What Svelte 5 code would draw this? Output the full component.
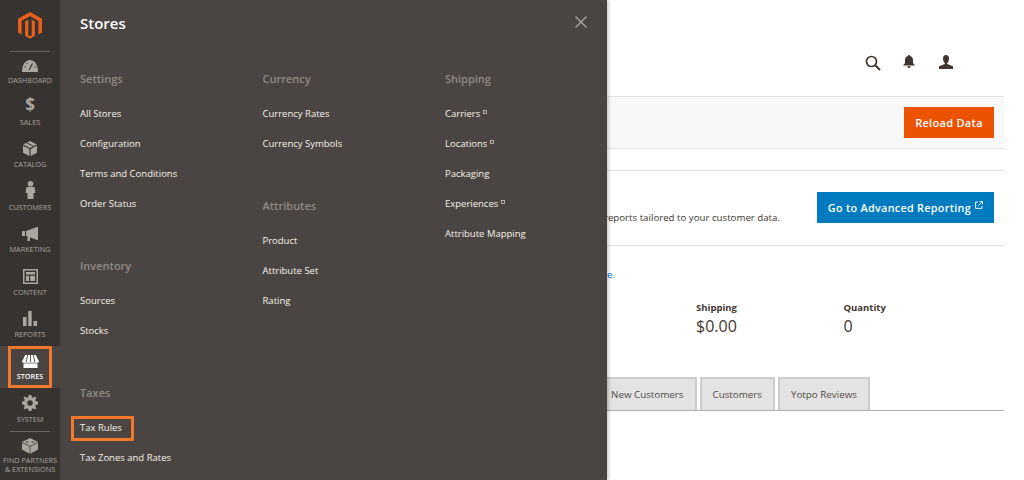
<script>
  const nav = [
    { id: 'dashboard', label: 'DASHBOARD' },
    { id: 'sales', label: 'SALES' },
    { id: 'catalog', label: 'CATALOG' },
    { id: 'customers', label: 'CUSTOMERS' },
    { id: 'marketing', label: 'MARKETING' },
    { id: 'content', label: 'CONTENT' },
    { id: 'reports', label: 'REPORTS' },
    { id: 'stores', label: 'STORES', active: true },
    { id: 'system', label: 'SYSTEM' }
  ];
  const columns = [
    [
      { title: 'Settings', links: ['All Stores', 'Configuration', 'Terms and Conditions', 'Order Status'] },
      { title: 'Inventory', links: ['Sources', 'Stocks'] },
      { title: 'Taxes', links: ['Tax Rules', 'Tax Zones and Rates'] }
    ],
    [
      { title: 'Currency', links: ['Currency Rates', 'Currency Symbols'] },
      { title: 'Attributes', links: ['Product', 'Attribute Set', 'Rating'] }
    ],
    [
      { title: 'Shipping', links: ['Carriers*', 'Locations*', 'Packaging', 'Experiences*', 'Attribute Mapping'] }
    ]
  ];
</script>

<div class="page">
  <aside class="sidebar">
    <div class="logo">
      <svg width="24" height="27" viewBox="0 0 24 27">
        <path fill="#eb5f1c" d="M12 0 L24 6.8 V20.6 L20.4 22.6 V8.9 L12 4.1 L3.6 8.9 V22.6 L0 20.6 V6.8 Z" />
        <path fill="#eb5f1c" d="M10.3 7.6 V23.2 L12 24.2 L13.7 23.2 V7.6 L16.9 9.5 V23.8 L12 26.8 L7.1 23.8 V9.5 Z" />
      </svg>
    </div>
    <nav class="nav">
      {#each nav as item}
        <div class="nav-item" class:active={item.active}>
          <div class="nav-inner">
            <span class="icon">
              {#if item.id === 'dashboard'}
                <svg width="16" height="12" viewBox="0 0 16 12"><path fill="currentColor" d="M0 12 C0 5 3 0 8 0 S16 5 16 12 Z" /><path stroke="#373330" stroke-width="1.2" d="M7 10 L10.5 3.5" /><circle cx="3" cy="7" r=".7" fill="#373330"/><circle cx="5" cy="3.6" r=".7" fill="#373330"/><circle cx="13" cy="7" r=".7" fill="#373330"/></svg>
              {:else if item.id === 'sales'}
                <span class="dollar">$</span>
              {:else if item.id === 'catalog'}
                <svg width="14" height="15" viewBox="0 0 14 15"><path fill="currentColor" d="M0 3.6 L7 0 L14 3.6 L7 7 Z" /><path fill="currentColor" d="M0 4.8 L6.4 8 V15 L0 11.8 Z M14 4.8 L7.6 8 V15 L14 11.8 Z" /><path stroke="#373330" stroke-width="1" d="M3.5 1.8 L10.5 5.3" /></svg>
              {:else if item.id === 'customers'}
                <svg width="11" height="18" viewBox="0 0 11 18"><circle cx="5.5" cy="2.8" r="2.8" fill="currentColor" /><path fill="currentColor" d="M1.5 6 H9.5 L10.5 12 H8.5 V18 H2.5 V12 H.5 Z" /></svg>
              {:else if item.id === 'marketing'}
                <svg width="16" height="14" viewBox="0 0 16 14"><path fill="currentColor" d="M0 4 H3 V9 H0 Z M4 4 L15 0 H16 V13 H15 L4 9 Z M5.5 10 H8 V14 H5.5 Z" /></svg>
              {:else if item.id === 'content'}
                <svg width="15" height="15" viewBox="0 0 15 15"><path fill="currentColor" fill-rule="evenodd" d="M0 0 H15 V15 H0 Z M1.5 1.5 V13.5 H13.5 V1.5 Z" /><path fill="currentColor" d="M3 3 H12 V5.5 H3 Z M3 6.7 H6 V12 H3 Z M7.2 6.7 H12 V12 H7.2 Z" /></svg>
              {:else if item.id === 'reports'}
                <svg width="14" height="15" viewBox="0 0 14 15"><path fill="currentColor" d="M0 6 H3.5 V15 H0 Z M5.2 0 H8.7 V15 H5.2 Z M10.5 10 H14 V15 H10.5 Z" /></svg>
              {:else if item.id === 'stores'}
                <svg width="17" height="13" viewBox="0 0 17 13"><path fill="currentColor" d="M3.2 0 H13.8 L17 6.4 C17 7.4 15.8 7.8 15 7.8 H2 C1.2 7.8 0 7.4 0 6.4 Z" /><path stroke="#4a4542" stroke-width=".9" d="M5.6 0 L4.2 7 M8.5 0 V7 M11.4 0 L12.8 7" /><path fill="currentColor" d="M1.5 8.4 H15.5 V13 H1.5 Z" /></svg>
              {:else if item.id === 'system'}
                <svg width="16" height="16" viewBox="0 0 16 16"><path fill="currentColor" fill-rule="evenodd" d="M6.6 0 H9.4 L9.8 2.2 L11.2 2.8 L13.1 1.5 L14.5 2.9 L13.2 4.8 L13.8 6.2 L16 6.6 V9.4 L13.8 9.8 L13.2 11.2 L14.5 13.1 L13.1 14.5 L11.2 13.2 L9.8 13.8 L9.4 16 H6.6 L6.2 13.8 L4.8 13.2 L2.9 14.5 L1.5 13.1 L2.8 11.2 L2.2 9.8 L0 9.4 V6.6 L2.2 6.2 L2.8 4.8 L1.5 2.9 L2.9 1.5 L4.8 2.8 L6.2 2.2 Z M8 5.2 A2.8 2.8 0 1 0 8 10.8 A2.8 2.8 0 1 0 8 5.2 Z" /></svg>
              {/if}
            </span>
            <span class="label">{item.label}</span>
          </div>
        </div>
      {/each}
      <div class="partners">
        <span class="icon">
          <svg width="16" height="16" viewBox="0 0 16 16"><path fill="currentColor" d="M8 0 L16 4 V11.5 L8 16 L0 11.5 V4 Z" /><path stroke="#373330" stroke-width=".8" fill="none" d="M0 4.5 L8 8.5 L16 4.5 M8 8.5 V16" /><ellipse cx="5" cy="4" rx="1.6" ry=".9" fill="#373330" opacity=".5" /><ellipse cx="11" cy="4" rx="1.6" ry=".9" fill="#373330" opacity=".5" /></svg>
        </span>
        <span class="label">FIND PARTNERS<br />&amp; EXTENSIONS</span>
      </div>
    </nav>
  </aside>

  <main class="main">
    <header class="top">
      <svg width="16" height="16" viewBox="0 0 16 16" fill="none"><circle cx="6.5" cy="6.5" r="5" stroke="#41362f" stroke-width="1.7" /><path d="M10.2 10.2 L15 15" stroke="#41362f" stroke-width="2" /></svg>
      <svg class="bell" width="12" height="13" viewBox="0 0 12 13"><path fill="#41362f" d="M6 0 C6.8 0 7 .5 7 1 C9 1.5 10 3 10 5 V8 L12 10.5 H0 L2 8 V5 C2 3 3 1.5 5 1 C5 .5 5.2 0 6 0 Z M4.3 11.2 H7.7 C7.7 12.2 7 13 6 13 S4.3 12.2 4.3 11.2 Z" /></svg>
      <svg width="14" height="14" viewBox="0 0 14 14"><path fill="#41362f" d="M7 0 C9 0 10 1.4 10 3.4 C10 5.4 9 7.6 8.2 8 V9 L14 11.2 V14 H0 V11.2 L5.8 9 V8 C5 7.6 4 5.4 4 3.4 C4 1.4 5 0 7 0 Z" /></svg>
    </header>

    <section class="reload-bar">
      <button class="btn orange">Reload Data</button>
    </section>

    <section class="reporting">
      <p class="reporting-text">Access advanced reports tailored to your customer data.</p>
      <button class="btn blue">Go to Advanced Reporting
        <svg class="ext" width="8" height="8" viewBox="0 0 8 8" fill="none"><path d="M3 1 H.6 V7.4 H7 V5" stroke="#fff" stroke-width=".9" /><path d="M3.2 4.8 L7 1 M4.6 .5 H7.5 V3.4" stroke="#fff" stroke-width=".9" /></svg>
      </button>
    </section>

    <p class="chart-note">Chart is disabled. To enable the chart, click <a href="#top">here.</a></p>

    <section class="totals">
      <div class="total"><span class="t-label">Shipping</span><span class="t-value">$0.00</span></div>
      <div class="total"><span class="t-label">Quantity</span><span class="t-value">0</span></div>
    </section>

    <section class="tabs">
      <div class="tab first">New Customers</div>
      <div class="tab">Customers</div>
      <div class="tab">Yotpo Reviews</div>
    </section>
  </main>

  <div class="panel">
    <div class="panel-title">Stores</div>
    <svg class="close" width="12" height="12" viewBox="0 0 12 12"><path d="M.5 .5 L11.5 11.5 M11.5 .5 L.5 11.5" stroke="#adaaa8" stroke-width="1.3" /></svg>
    <div class="menu">
      {#each columns as col}
        <div class="col">
          {#each col as group}
            <div class="group">
              <div class="group-title">{group.title}</div>
              {#each group.links as link}
                <div class="link" class:hl={link === 'Tax Rules'}>
                  <span>{link.replace('*', '')}</span>{#if link.endsWith('*')}<svg class="mini" width="4" height="4" viewBox="0 0 4 4"><rect x=".5" y=".5" width="3" height="3" fill="none" stroke="#c9c6c4" stroke-width=".8" /></svg>{/if}
                </div>
              {/each}
            </div>
          {/each}
        </div>
      {/each}
    </div>
  </div>
</div>

<style>
  :global(body) { margin: 0; overflow: hidden; background: #fff; }
  .page {
    position: relative;
    display: flex;
    width: 1024px;
    height: 480px;
    overflow: hidden;
    font-family: "Open Sans", "Liberation Sans", sans-serif;
    color: #41362f;
  }
  .sidebar {
    flex: 0 0 60px;
    width: 60px;
    min-width: 0;
    background: #373330;
    display: flex;
    flex-direction: column;
  }
  .logo {
    flex: none;
    height: 52px;
    box-sizing: border-box;
    padding-top: 12px;
    margin: 0 10px;
    display: flex;
    justify-content: center;
    align-items: flex-start;
    border-bottom: 1px solid #6a6663;
  }
  .nav { flex: none; display: flex; flex-direction: column; }
  .nav-item {
    flex: none;
    height: 42.5px;
    color: #aaa6a0;
    box-sizing: border-box;
  }
  .nav-item:first-child { height: 39px; }
  .nav-inner {
    height: 100%;
    box-sizing: border-box;
    display: flex;
    flex-direction: column;
    align-items: center;
    justify-content: flex-end;
    padding-bottom: 6px;
  }
  .nav-item:first-child .nav-inner { padding-bottom: 5px; }
  .icon { display: flex; align-items: flex-end; justify-content: center; height: 18px; margin-bottom: 2px; }
  .dollar { font-size: 17px; line-height: 18px; font-weight: 700; }
  .label { font-size: 7.3px; line-height: 12px; text-align: center; white-space: nowrap; }
  .nav-item.active { background: #4a4542; color: #fff; padding: 0 8px; height: 42px; }
  .nav-item.active .nav-inner { border: 3px solid #f2792b; padding-bottom: 3px; }
  .nav-item.active .label { font-weight: 600; }
  .partners {
    flex: none;
    margin: 0 10px;
    padding-top: 6px;
    border-top: 1px solid #6a6663;
    display: flex;
    flex-direction: column;
    align-items: center;
    color: #aaa6a0;
  }
  .partners .icon { height: 16px; margin-bottom: 1px; }
  .partners .label { line-height: 9px; margin-top: 1px; }
  .main { flex: 1; padding-right: 20px; min-width: 0; }
  .top {
    height: 96px;
    box-sizing: border-box;
    padding: 55px 51px 0 0;
    display: flex;
    justify-content: flex-end;
    gap: 22px;
    align-items: flex-start;
  }
  .bell { margin-right: 2px; }
  .reload-bar {
    height: 53px;
    box-sizing: border-box;
    background: #f8f8f8;
    border-top: 1px solid #e3e3e3;
    border-bottom: 1px solid #e3e3e3;
    display: flex;
    justify-content: flex-end;
    align-items: center;
    padding-right: 10px;
  }
  .btn {
    border: 0;
    color: #fff;
    font-family: inherit;
    font-weight: 600;
    height: 31px;
    padding: 0;
    letter-spacing: .3px;
  }
  .orange { background: #eb5202; width: 90px; font-size: 11px; }
  .blue { background: #007bc0; width: 177px; font-size: 10.8px; margin-top: 21px; }
  .ext { vertical-align: 3px; margin-left: 1px; }
  .reporting {
    margin-top: 21px;
    border-top: 1px solid #e3e3e3;
    height: 74px;
    border-bottom: 1px solid #e3e3e3;
    display: flex;
    justify-content: flex-end;
    align-items: flex-start;
    padding-right: 10px;
    gap: 37px;
  }
  .reporting-text { margin: 40px 0 0; font-size: 9.7px; line-height: 14px; white-space: nowrap; }
  .chart-note { margin: 22px 0 0; width: 555px; text-align: right; font-size: 9.7px; line-height: 14px; white-space: nowrap; }
  .chart-note a { color: #007bdb; text-decoration: none; }
  .totals { display: flex; padding-left: 636px; margin-top: 19px; }
  .total { width: 147.5px; display: flex; flex-direction: column; }
  .t-label { font-size: 9.5px; font-weight: 700; line-height: 14px; }
  .t-value { font-size: 16px; line-height: 22px; }
  .tabs {
    margin-top: 40px;
    display: flex;
    gap: 3px;
    padding-left: 530px;
    border-bottom: 1px solid #adadad;
    height: 33px;
  }
  .tab {
    background: #e3e3e3;
    border: 2px solid #cccccc;
    border-bottom: 0;
    padding: 0 11px;
    font-size: 9.8px;
    line-height: 31px;
    color: #514943;
    white-space: nowrap;
  }
  .tab.first { padding-left: 19px; }
  .panel {
    position: absolute;
    top: 0;
    left: 60px;
    width: 547px;
    height: 480px;
    background: #4a4542;
    box-shadow: 2px 0 3px rgba(0, 0, 0, .2);
    padding: 0 0 0 20px;
    box-sizing: border-box;
  }
  .panel-title { color: #fff; font-size: 15px; font-weight: 600; line-height: 20px; padding-top: 13px; }
  .close { position: absolute; top: 16px; right: 20px; }
  .menu { display: grid; grid-template-columns: 182.5px 182.5px 1fr; margin-top: 37px; }
  .group { padding-bottom: 37.6px; }
  .group-title { color: #8f8a86; font-size: 11px; font-weight: 600; line-height: 18px; margin-bottom: 11.4px; }
  .link { color: #f7f3eb; font-size: 9.5px; line-height: 30px; height: 30px; position: relative; display: flex; align-items: center; }
  .mini { margin: -4px 0 0 3px; }
  .link.hl::before {
    content: "";
    position: absolute;
    left: -9px;
    top: 3px;
    width: 63px;
    height: 25px;
    box-sizing: border-box;
    border: 3px solid #f2792b;
  }
</style>
